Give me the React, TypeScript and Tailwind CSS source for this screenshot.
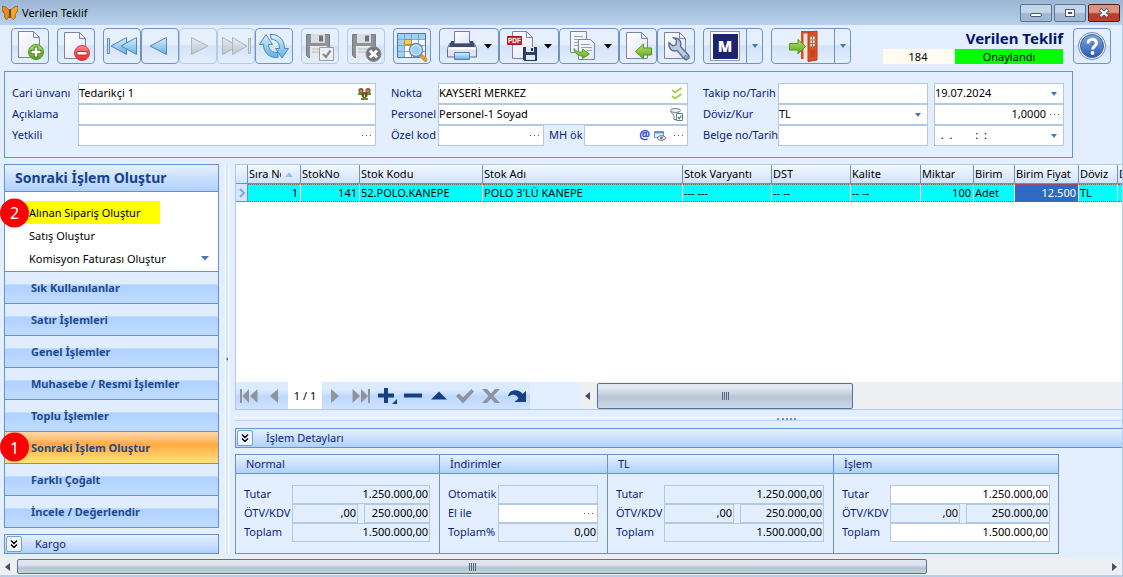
import React from 'react';
import clsx from 'clsx';

const toolButton =
  'flex h-9 items-center justify-center rounded-sm border bg-linear-to-b from-[#e6f0fc] from-45% via-[#d3e3f7] via-50% to-[#e3effe]';

// Gradients shared by all the toolbar drawings
const IconDefs = () => (
  <svg className="absolute size-0" aria-hidden="true">
    <defs>
      <linearGradient id="blue" x1="0" y1="0" x2="0" y2="1">
        <stop offset="0" stopColor="#d8effc" />
        <stop offset="1" stopColor="#5fb2e6" />
      </linearGradient>
      <linearGradient id="grey" x1="0" y1="0" x2="0" y2="1">
        <stop offset="0" stopColor="#e8ecf2" />
        <stop offset="1" stopColor="#bcc3cd" />
      </linearGradient>
      <linearGradient id="paper" x1="0" y1="0" x2="1" y2="1">
        <stop offset="0" stopColor="#ffffff" />
        <stop offset="1" stopColor="#e2e6f4" />
      </linearGradient>
      <linearGradient id="green" x1="0" y1="0" x2="0" y2="1">
        <stop offset="0" stopColor="#b6e46a" />
        <stop offset="1" stopColor="#5aa51c" />
      </linearGradient>
      <linearGradient id="red" x1="0" y1="0" x2="0" y2="1">
        <stop offset="0" stopColor="#ff8d88" />
        <stop offset="1" stopColor="#e8202c" />
      </linearGradient>
      <linearGradient id="help" x1="0" y1="0" x2="0" y2="1">
        <stop offset="0" stopColor="#7fa6e0" />
        <stop offset="1" stopColor="#2a5cb4" />
      </linearGradient>
    </defs>
  </svg>
);

type IconProps = { children: React.ReactNode; className?: string; box?: string };

const Icon = ({ children, className = 'size-8', box = '0 0 32 32' }: IconProps) => (
  <svg viewBox={box} className={clsx('shrink-0', className)} fill="none" aria-hidden="true">
    {children}
  </svg>
);

const Sheet = () => (
  <>
    <path d="M4.500 2.500h15l6 6v20h-21z" fill="url(#paper)" stroke="#7a86a8" />
    <path d="M19.500 2.500v6h6z" fill="#f4f6fc" stroke="#7a86a8" />
  </>
);

const NewIcon = () => (
  <Icon>
    <path d="M4.500 1.500h15l6 6v20h-21z" fill="url(#paper)" stroke="#7a86a8" />
    <path d="M19.500 1.500v6h6z" fill="#f4f6fc" stroke="#7a86a8" />
    <circle cx="22" cy="22" r="7.500" fill="url(#green)" stroke="#4d8d1a" />
    <path d="M22 16.500v11M16.500 22h11" stroke="#47801c" strokeWidth="4.500" />
    <path d="M22 17.500v9M17.500 22h9" stroke="#fff" strokeWidth="2.500" />
  </Icon>
);

const DeleteIcon = () => (
  <Icon>
    <Sheet />
    <circle cx="22" cy="23" r="7.500" fill="url(#red)" stroke="#dc3a40" />
    <path d="M17 21.500h10v3.500h-10z" fill="#fff" stroke="#b8353b" />
  </Icon>
);

const FirstIcon = () => (
  <Icon>
    <path d="M1.500 8.500h2v15h-2z" fill="#bfe2f6" stroke="#6689bb" />
    <path d="M20.500 7.500v17L5 16z" fill="url(#blue)" stroke="#5c82b8" />
    <path d="M30.500 7.500v17L15 16z" fill="url(#blue)" stroke="#5c82b8" />
  </Icon>
);

const PrevIcon = () => (
  <Icon>
    <path d="M22.500 7.500v17L6 16z" fill="url(#blue)" stroke="#5c82b8" />
  </Icon>
);

const NextIcon = () => (
  <Icon>
    <path d="M9.500 7.500v17L26 16z" fill="url(#grey)" stroke="#adb4be" />
  </Icon>
);

const LastIcon = () => (
  <Icon>
    <path d="M2.500 7.500v17L18 16z" fill="url(#grey)" stroke="#adb4be" />
    <path d="M12.500 7.500v17L27 16z" fill="url(#grey)" stroke="#adb4be" />
    <path d="M28.500 8.500h2v15h-2z" fill="#d9dde4" stroke="#adb4be" />
  </Icon>
);

// Two bent arrows chasing each other
const RefreshIcon = () => (
  <Icon>
    <path d="M8 4.500 1.500 14.500h4C5.500 22 11 27.500 17.500 27.500h2.500v-5C14.500 23 10.500 20 10.500 14.500h4z" fill="url(#blue)" stroke="#5486ba" />
    <path d="M24 28 30.500 18.500h-4C26.500 10 21 4.500 14 4.500h-2L13.500 9.500c5 0 8 3.500 8 9h-4z" fill="url(#blue)" stroke="#5486ba" />
  </Icon>
);

const GreyDisk = () => (
  <>
    <path d="M2.500 4.500h23v23h-21l-2-2z" fill="#8d9198" stroke="#777b82" />
    <path d="M7 4h14v9H7z" fill="#d9dce1" />
    <path d="M15 5.500h4v6h-4z" fill="#6e7278" />
    <path d="M6 16h17v12H6z" fill="#e6e8ec" />
    <path d="M8 19h13M8 22h13" stroke="#b6bac1" />
  </>
);

const SaveIcon = () => (
  <Icon>
    <GreyDisk />
    <path d="M15.500 17.500h14v13h-14z" fill="#eceef1" stroke="#999da5" />
    <path d="m19 24 3 3 4.500-6.500" stroke="#888c94" strokeWidth="2.200" />
  </Icon>
);

const CancelSaveIcon = () => (
  <Icon>
    <GreyDisk />
    <circle cx="23.500" cy="24" r="7.500" fill="#74777e" stroke="#8e9198" />
    <path d="m20 20.500 7 7m0-7-7 7" stroke="#fff" strokeWidth="3" />
  </Icon>
);

const TableSearchIcon = () => (
  <Icon>
    <path d="M1.500 3.500h28v24h-28z" fill="#fff" stroke="#4878b8" />
    <path d="M2 4h27v5H2zM2 9h6v18H2z" fill="#9ed0f1" />
    <path d="M2 9.500h27M2 15.500h27M2 21.500h27M8.500 4v23M15.500 4v23M22.500 4v23" stroke="#7ea5d4" />
    <path d="M8.500 9.500h7v5h-7z" fill="#ffc95e" stroke="#c58a28" />
    <path d="m24.500 25 5 5" stroke="#d99a3f" strokeWidth="4" strokeLinecap="round" />
    <circle cx="20" cy="20" r="6.500" fill="#d5effc" stroke="#6f88b8" strokeWidth="1.500" />
    <circle cx="20" cy="20" r="4.500" fill="#9bd0f3" />
  </Icon>
);

const PrintIcon = () => (
  <Icon>
    <path d="M3.500 13.500h25l2 5v8.500h-29v-8.500z" fill="#dfe5f0" stroke="#63708f" />
    <path d="M5 11h22l2 6H3z" fill="#3c4b6b" />
    <path d="M8.500 1.500h15v12h-15z" fill="url(#paper)" stroke="#7380a0" />
    <path d="M2.500 18.500h27" stroke="#fff" strokeWidth="2" />
    <path d="M8.500 22.500h15v7h-15z" fill="url(#blue)" stroke="#5d79a4" />
  </Icon>
);

const PdfIcon = () => (
  <Icon>
    <path d="M6.500 1.500h14l6 6v21h-20z" fill="url(#paper)" stroke="#7a86a8" />
    <path d="M20.500 1.500v6h6z" fill="#fff" stroke="#7a86a8" />
    <path d="M1.500 6.500h14v8h-14z" fill="#d9232e" stroke="#a91622" />
    <text x="2" y="13" fontSize="6.500" fontWeight="700" fontFamily="Liberation Sans, sans-serif" fill="#fff">
      PDF
    </text>
    <path d="M17.500 17.500h13v13h-12l-1-1z" fill="#2e4168" stroke="#23324f" />
    <path d="M20 17h8v5h-8zM20 25h9v5h-9z" fill="#dfe6f2" />
    <path d="M25 18h2v3h-2z" fill="#23324f" />
  </Icon>
);

const CopyIcon = () => (
  <Icon>
    <path d="M4.500 1.500h16v21h-16z" fill="url(#paper)" stroke="#7a86a8" />
    <path d="M8 6.500h9M8 9.500h6M8 12.500h6M8 15.500h6" stroke="#8da2cd" />
    <path d="M12.500 9.500h12l4 4v16h-16z" fill="url(#paper)" stroke="#7a86a8" />
    <path d="M15 14.500h9M15 17.500h11M21 20.500h5" stroke="#8da2cd" />
    <path d="M8 18.500c1.500 3 5 4 8.500 3.500V19l7 5-7 4.500V26C12 26 8.500 23 8 18.500z" fill="url(#green)" stroke="#54951c" />
  </Icon>
);

const ImportIcon = () => (
  <Icon>
    <Sheet />
    <path d="M13.500 21.500 21.500 14v4h8v7h-8v4z" fill="url(#green)" stroke="#54951c" />
  </Icon>
);

const SettingsSheetIcon = () => (
  <Icon>
    <Sheet />
    <path
      d="M9 12.500l4 3.500 3-1.500.500-4.500-3-2c5-.500 8.500 3 7 8.500l8 8.500c2 3-1.500 6-4 4l-7.500-8.500C12 22.500 8 18 9 12.500z"
      fill="#b9c9e0"
      stroke="#566c90"
      strokeWidth="1.300"
    />
    <circle cx="26" cy="27" r="1.300" fill="#fff" stroke="#566c90" />
  </Icon>
);

const DoorIcon = () => (
  <Icon className="h-8 w-9" box="0 0 36 32">
    <path d="M17 1h14v28H17z" fill="#fbe3d6" />
    <path d="M16 1h14v2.500H18.500V29H16z" fill="#d9492a" />
    <path d="M23 2.500 32 1v29l-9 1.500z" fill="#dc4f23" stroke="#bd3d16" />
    <path d="M25 6.500 30 6v10.500l-5 .500z" fill="#ffefcb" stroke="#a1755d" />
    <path d="M27.500 6v11M25 10h5M25 13.500h5" stroke="#a1755d" />
    <path d="M25 20.500 30 20v7l-5 .500z" fill="#c5431b" />
    <path d="M20.500 16.500 13 9.500v4H4.500v6.500H13v4z" fill="url(#green)" stroke="#54951c" />
  </Icon>
);

const HelpIcon = () => (
  <Icon>
    <circle cx="16" cy="16" r="13.500" fill="#f3f7fd" stroke="#6b87b8" />
    <circle cx="16" cy="16" r="11.500" fill="url(#help)" stroke="#3b62a8" />
    <path d="M12 13.500c0-5.500 8.500-5.500 8.500-.500 0 3.500-4 3.500-4 6.500" stroke="#fff" strokeWidth="3" />
    <circle cx="16.500" cy="23" r="1.900" fill="#fff" />
  </Icon>
);

const Caret = ({ className = 'text-[#4a77b4]' }: { className?: string }) => (
  <svg viewBox="0 0 8 5" className={clsx('h-[5px] w-2 shrink-0', className)} aria-hidden="true">
    <path d="M0 0h8L4 4.500z" fill="currentColor" />
  </svg>
);

const SmallCaret = () => (
  <svg viewBox="0 0 6 4" className="h-1 w-1.5 shrink-0 text-[#4a77b4]" aria-hidden="true">
    <path d="M0 0h6L3 4z" fill="currentColor" />
  </svg>
);

const Dots = () => (
  <svg viewBox="0 0 9 2" className="h-0.5 w-[9px] shrink-0" aria-hidden="true">
    <path d="M0 0h1v1H0zM4 0h1v1H4zM8 0h1v1H8z" fill="#3b5f96" />
  </svg>
);

type ToolProps = { label: string; children: React.ReactNode; disabled?: boolean; className?: string };

const Tool = ({ label, children, disabled, className = 'w-[38px]' }: ToolProps) => (
  <button
    type="button"
    aria-label={label}
    disabled={disabled}
    className={clsx(toolButton, className, disabled ? 'border-[#b5cae4]' : 'border-[#7193c3]')}
  >
    {children}
  </button>
);

const MenuTool = ({ label, children }: ToolProps) => (
  <Tool label={label} className="w-[60px] gap-1.5">
    {children}
    <Caret className="text-black" />
  </Tool>
);

const SplitTool = ({ label, children, wide }: ToolProps & { wide?: boolean }) => (
  <div className={clsx(toolButton, 'border-[#7193c3]', wide ? 'w-20' : 'w-15')}>
    <button type="button" aria-label={label} className="flex h-full flex-1 items-center justify-center">
      {children}
    </button>
    <button
      type="button"
      aria-label={`${label} menü`}
      className="flex h-full w-4 items-center justify-center border-l border-[#7193c3]"
    >
      <SmallCaret />
    </button>
  </div>
);

const TitleBar = () => (
  <header className="flex h-[25px] items-center bg-linear-to-b from-[#9cb6d3] to-[#b7d1ec] pr-[3px] pl-0.5">
    <svg viewBox="0 0 16 16" className="size-4" aria-hidden="true">
      <path d="M7.500 6C5 2 2 1 0 1.500 0 5 1 8 3 9c-1 2 0 5 1.500 5.500C6.500 14 7.500 11 7.500 8z" fill="#f08a12" stroke="#80440c" strokeWidth=".7" />
      <path d="M8.500 6C11 2 14 1 16 1.500c0 3.500-1 6.500-3 7.500 1 2 0 5-1.500 5.500C9.500 14 8.500 11 8.500 8z" fill="#f7a823" stroke="#80440c" strokeWidth=".7" />
      <path d="M8 4v9" stroke="#4a2b10" strokeWidth="1.200" />
    </svg>
    <h1 className="ml-1 flex-1 text-[11px]">Verilen Teklif</h1>
    <div className="flex gap-0.5">
      <button
        type="button"
        aria-label="Simge durumuna küçült"
        className="flex h-[18px] w-8 items-center justify-center rounded-xs border border-[#5b7290] bg-linear-to-b from-[#c3d6ea] from-45% to-[#9fb9d5] to-55%"
      >
        <span className="mt-1 h-1 w-3 rounded-xs border border-[#535666] bg-white" />
      </button>
      <button
        type="button"
        aria-label="Önceki boyut"
        className="flex h-[18px] w-8 items-center justify-center rounded-xs border border-[#5b7290] bg-linear-to-b from-[#c3d6ea] from-45% to-[#9fb9d5] to-55%"
      >
        <span className="flex h-2 w-2.5 items-center justify-center border border-[#535666] bg-white">
          <span className="h-0.5 w-1 bg-[#535666]" />
        </span>
      </button>
      <button
        type="button"
        aria-label="Kapat"
        className="flex h-[18px] w-8 items-center justify-center rounded-xs border border-[#541a1e] bg-linear-to-b from-[#dd9384] from-45% to-[#bd3d26] to-55%"
      >
        <svg viewBox="0 0 12 10" className="h-2.5 w-3" aria-hidden="true">
          <path d="m2 1.500 8 7m0-7-8 7" stroke="#535666" strokeWidth="4" />
          <path d="m2.500 2 7 6m0-6-7 6" stroke="#fff" strokeWidth="2.300" />
        </svg>
      </button>
    </div>
  </header>
);

const Toolbar = () => (
  <div className="flex items-start pt-[3px] pr-[11px] pl-[11px]">
    <div className="flex gap-2">
      <Tool label="Yeni"><NewIcon /></Tool>
      <Tool label="Sil"><DeleteIcon /></Tool>
      <div className="flex">
        <Tool label="İlk kayıt"><FirstIcon /></Tool>
        <Tool label="Önceki kayıt"><PrevIcon /></Tool>
        <Tool label="Sonraki kayıt" disabled><NextIcon /></Tool>
        <Tool label="Son kayıt" disabled><LastIcon /></Tool>
        <Tool label="Yenile"><RefreshIcon /></Tool>
      </div>
      <Tool label="Kaydet" disabled><SaveIcon /></Tool>
      <Tool label="Vazgeç" disabled><CancelSaveIcon /></Tool>
      <Tool label="Listele"><TableSearchIcon /></Tool>
      <div className="flex">
        <MenuTool label="Yazdır"><PrintIcon /></MenuTool>
        <MenuTool label="PDF kaydet"><PdfIcon /></MenuTool>
        <MenuTool label="Kopyala"><CopyIcon /></MenuTool>
        <Tool label="İçeri al"><ImportIcon /></Tool>
        <Tool label="Ayarlar"><SettingsSheetIcon /></Tool>
      </div>
      <SplitTool label="M">
        <span className="flex size-[30px] items-center justify-center border border-[#8f97bb] bg-white">
          <span className="flex size-[25px] items-center justify-center bg-[#1c2470] text-[15px] font-black text-white">
            M
          </span>
        </span>
      </SplitTool>
      <SplitTool label="Çıkış" wide><DoorIcon /></SplitTool>
    </div>
    <div className="ml-auto w-[180px]">
      <h2 className="text-right text-[15px] leading-5 font-bold text-[#00146e]">Verilen Teklif</h2>
      <div className="mt-px flex gap-0.5 text-center text-[11px] leading-[15px]">
        <span className="w-[70px] bg-[#fffbf0]">184</span>
        <span className="flex-1 bg-[#00ff00]">Onaylandı</span>
      </div>
    </div>
    <Tool label="Yardım" className="ml-2.5 w-[38px]"><HelpIcon /></Tool>
  </div>
);

type FieldProps = {
  id: string;
  value?: string;
  className?: string;
  right?: boolean;
  children?: React.ReactNode;
};

const Field = ({ id, value = '', className, right, children }: FieldProps) => (
  <div className={clsx('flex h-[21px] items-center gap-1 border border-[#b3c8e4] bg-white', children && 'pr-1', className)}>
    <input
      id={id}
      defaultValue={value}
      className={clsx('h-full w-0 min-w-0 flex-1 bg-transparent pb-0.5 text-black outline-none', right && 'text-right')}
    />
    {children}
  </div>
);

const Label = ({ id, className, children }: { id: string; className?: string; children: React.ReactNode }) => (
  <label htmlFor={id} className={clsx('shrink-0 pb-0.5 whitespace-nowrap text-[#0b1d78]', className)}>
    {children}
  </label>
);

const PeopleIcon = () => (
  <Icon className="h-3 w-[13px]" box="0 0 13 12">
    <path d="M0 5h5v2H0zM8 5h5v2H8zM3 10h7v2H3z" fill="#4e9a3a" />
    <circle cx="3" cy="2.700" r="2.600" fill="#8a5a30" />
    <circle cx="10" cy="2.700" r="2.600" fill="#8a5a30" />
    <circle cx="6.500" cy="7" r="3" fill="#7b4a22" />
    <path d="M2.500 2h1v2h-1zM9.500 2h1v2h-1zM6 6.500h1V9H6z" fill="#f3cf9c" />
  </Icon>
);

const ChecksIcon = () => (
  <Icon className="h-[13px] w-3" box="0 0 12 13">
    <path d="m1 3 3 2.500L10.500 1M1 9l3 2.500L10.500 7" stroke="#a5cf55" strokeWidth="1.800" />
  </Icon>
);

const FilterIcon = () => (
  <Icon className="size-[13px]" box="0 0 13 13">
    <ellipse cx="5.500" cy="2.500" rx="5" ry="2" fill="#eef1f6" stroke="#6b7a94" />
    <path d="M.5 3.500 4 7.500v4h2.500" stroke="#6b7a94" />
    <path d="M6.500 5.500h6v7h-6z" fill="#fff" stroke="#6b7a94" />
    <path d="m8 9 1.300 1.700L11.500 7.500" stroke="#3e9b2b" strokeWidth="1.300" />
  </Icon>
);

const PreviewIcon = () => (
  <Icon className="h-2.5 w-3" box="0 0 12 10">
    <path d="M.5.5h9v6h-9z" fill="#e9f3fd" stroke="#6d93c4" />
    <path d="M1 1h8v1.500H1z" fill="#5a95d6" />
    <ellipse cx="7.500" cy="7" rx="4" ry="2.300" fill="#fff" stroke="#56657f" />
    <circle cx="7.500" cy="7" r="1.300" fill="#56657f" />
  </Icon>
);

const DocumentForm = () => (
  <form className="mx-1 mt-[7px] flex w-[1069px] border border-[#6593cf] px-[7px] pt-[11px] pb-[11px]">
    <div className="w-[379px]">
      <div className="flex items-center">
        <Label id="cari" className="w-[66px]">Cari ünvanı</Label>
        <Field id="cari" value="Tedarikçi 1" className="w-[298px] pr-0.5"><PeopleIcon /></Field>
      </div>
      <div className="flex items-center">
        <Label id="aciklama" className="w-[66px]">Açıklama</Label>
        <Field id="aciklama" className="w-[298px]" />
      </div>
      <div className="flex items-center">
        <Label id="yetkili" className="w-[66px]">Yetkili</Label>
        <Field id="yetkili" className="w-[298px]"><Dots /></Field>
      </div>
    </div>
    <div className="w-[312px]">
      <div className="flex items-center">
        <Label id="nokta" className="w-[47px]">Nokta</Label>
        <Field id="nokta" value="KAYSERİ MERKEZ" className="w-[250px]"><ChecksIcon /></Field>
      </div>
      <div className="flex items-center">
        <Label id="personel" className="w-[47px]">Personel</Label>
        <Field id="personel" value="Personel-1 Soyad" className="w-[250px] pr-0.5"><FilterIcon /></Field>
      </div>
      <div className="flex items-center">
        <Label id="ozelkod" className="w-[47px]">Özel kod</Label>
        <Field id="ozelkod" className="w-[106px]"><Dots /></Field>
        <Label id="mhok" className="w-10 pl-[5px]">MH ök</Label>
        <Field id="mhok" className="w-[104px]">
          <span className="pb-0.5 text-[12px] font-bold text-[#2846e0]">@</span>
          <PreviewIcon />
          <span className="flex pl-1"><Dots /></span>
        </Field>
      </div>
    </div>
    <div className="w-[361px]">
      <div className="flex items-center">
        <Label id="takip" className="w-[75px]">Takip no/Tarih</Label>
        <Field id="takip" className="mr-1.5 w-[150px]" />
        <Field id="tarih" value="19.07.2024" className="w-[130px] pr-1.5"><SmallCaret /></Field>
      </div>
      <div className="flex items-center">
        <Label id="doviz" className="w-[75px]">Döviz/Kur</Label>
        <div className="mr-1.5 flex h-[21px] w-[150px] items-center border border-[#b3c8e4] bg-white pr-1.5">
          <select id="doviz" defaultValue="TL" className="h-full flex-1 appearance-none bg-transparent pb-0.5 text-black outline-none">
            <option>TL</option>
          </select>
          <SmallCaret />
        </div>
        <Field id="kur" value="1,0000" right className="w-[130px]"><Dots /></Field>
      </div>
      <div className="flex items-center">
        <Label id="belge" className="w-[75px]">Belge no/Tarih</Label>
        <Field id="belge" className="mr-1.5 w-[150px]" />
        <Field id="belgetarih" value={'\u00a0\u00a0.\u00a0\u00a0.\u00a0\u00a0\u00a0\u00a0\u00a0\u00a0\u00a0\u00a0:\u00a0\u00a0:'} className="w-[130px] pr-1.5"><SmallCaret /></Field>
      </div>
    </div>
  </form>
);

const StepBadge = ({ step }: { step: number }) => (
  <span className="absolute top-1/2 -left-[5px] flex size-[29px] -translate-y-1/2 items-center justify-center rounded-full bg-[#fb0007] text-base text-white">
    {step}
  </span>
);

const groups = [
  'Sık Kullanılanlar',
  'Satır İşlemleri',
  'Genel İşlemler',
  'Muhasebe / Resmi İşlemler',
  'Toplu İşlemler',
  'Sonraki İşlem Oluştur',
  'Farklı Çoğalt',
  'İncele / Değerlendir',
];

const ExpandButton = ({ label }: { label: string }) => (
  <button
    type="button"
    aria-label={label}
    className="flex size-4 items-center justify-center rounded-xs border border-[#7f9dc6] bg-[#eef4fd]"
  >
    <svg viewBox="0 0 8 8" className="size-2" fill="none" stroke="#000" strokeWidth="1.400" aria-hidden="true">
      <path d="m1 .5 3 3 3-3M1 4.500l3 3 3-3" />
    </svg>
  </button>
);

const Sidebar = () => (
  <aside className="flex w-[215px] shrink-0 flex-col justify-between">
    <nav className="border border-[#6593cf] bg-white">
      <h2 className="h-[27px] border-b border-[#6593cf] bg-linear-to-b from-[#e6f1ff] to-[#b0d0fb] pl-2.5 text-sm leading-[26px] font-bold text-[#15428b]">
        Sonraki İşlem Oluştur
      </h2>
      <ul className="pt-[9px] pb-px text-[11px] leading-[23px] text-black">
        <li className="relative pl-5">
          <a href="#siparis" className="block w-[135px] bg-[#ffff00] pl-1 whitespace-nowrap">Alınan Sipariş Oluştur</a>
          <StepBadge step={2} />
        </li>
        <li className="pl-6"><a href="#satis">Satış Oluştur</a></li>
        <li className="flex items-center justify-between pr-[9px] pl-6">
          <a href="#komisyon">Komisyon Faturası Oluştur</a>
          <Caret />
        </li>
      </ul>
      <ul>
        {groups.map((group) => (
          <li key={group} className="relative">
            <button
              type="button"
              className={clsx(
                'h-8 w-full border-t border-[#6593cf] bg-linear-to-b pl-[26px] text-left text-[11px] font-bold text-[#1f4a8c]',
                group === 'Sonraki İşlem Oluştur'
                  ? 'from-[#ffd9aa] from-0% via-[#ffab3f] via-40% to-[#fee17a] to-100%'
                  : 'from-[#dfedff] from-38% via-[#afd2ff] via-42% to-[#c0dbff] to-100%',
              )}
            >
              {group}
            </button>
            {group === 'Sonraki İşlem Oluştur' && <StepBadge step={1} />}
          </li>
        ))}
      </ul>
    </nav>
    <div className="mt-1.5 flex h-5 items-center border border-[#6593cf] bg-linear-to-b from-[#e6f1ff] to-[#b0d0fb] pl-px text-[#0b1d78]">
      <ExpandButton label="Kargo bölümünü aç" />
      <span className="pl-[13px]">Kargo</span>
    </div>
  </aside>
);

const columns = [
  { title: 'Sıra No', value: '1', width: 'w-[53px]', right: true, sorted: true },
  { title: 'StokNo', value: '141', width: 'w-[59px]', right: true },
  { title: 'Stok Kodu', value: '52.POLO.KANEPE', width: 'w-[123px]' },
  { title: 'Stok Adı', value: "POLO 3'LÜ KANEPE", width: 'w-[200px]' },
  { title: 'Stok Varyantı', value: '--- ---', width: 'w-[89px]' },
  { title: 'DST', value: '-- --', width: 'w-[79px]' },
  { title: 'Kalite', value: '-- --', width: 'w-[70px]' },
  { title: 'Miktar', value: '100', width: 'w-[53px]', right: true },
  { title: 'Birim', value: 'Adet', width: 'w-[41px]' },
  { title: 'Birim Fiyat', value: '12.500', width: 'w-16', right: true, selected: true },
  { title: 'Döviz', value: 'TL', width: 'w-[39px]' },
  { title: 'Döviz Kuru', value: '', width: 'w-20' },
];

const StockTable = () => (
  <div className="min-h-[217px] flex-1 overflow-hidden bg-white">
    <table className="w-[962px] table-fixed border-separate border-spacing-0 text-black">
      <thead>
        <tr className="h-[19px]">
          <th aria-label="Satır" className="w-3 border-r border-b border-[#6593cf] bg-linear-to-b from-[#f5f9ff] to-[#cfe2fb]" />
          {columns.map((col) => (
            <th
              key={col.title}
              className={clsx(
                col.width,
                'border-r border-b border-[#6593cf] bg-linear-to-b from-[#f5f9ff] to-[#cfe2fb] p-0 pl-px text-left font-normal',
              )}
            >
              <div className="flex items-center overflow-hidden leading-[18px] whitespace-nowrap">
                <span className={clsx('overflow-hidden', col.sorted && 'w-8')}>{col.title}</span>
                {col.sorted && <Caret className="ml-1 rotate-180 text-[#8fbcf3]" />}
              </div>
            </th>
          ))}
        </tr>
      </thead>
      <tbody>
        <tr className="h-[18px]">
          <td className="border-r border-b border-[#6593cf] bg-[#d5e6fc] p-0">
            <svg viewBox="0 0 11 10" className="h-2.5 w-[11px]" fill="none" stroke="#7ba7e0" strokeWidth="2" aria-hidden="true">
              <path d="m4 1 4 4-4 4" />
            </svg>
          </td>
          {columns.map((col) => (
            <td
              key={col.title}
              className={clsx(
                'overflow-hidden border-y border-r border-y-[#ff2a1a] border-r-white p-0 px-px leading-4 whitespace-nowrap [border-bottom-style:dotted] [border-top-style:dotted]',
                col.right && 'pr-0.5 text-right',
                col.selected ? 'bg-[#316ac5] text-white' : 'bg-[#00ffff]',
              )}
            >
              {col.value}
            </td>
          ))}
        </tr>
      </tbody>
    </table>
  </div>
);

const NavButton = ({ label, children, className = 'text-[#8f949c]' }: ToolProps) => (
  <button type="button" aria-label={label} className={clsx('flex h-full w-[26px] items-center justify-center', className)}>
    <svg viewBox="0 0 20 16" className="h-4 w-5" fill="currentColor" aria-hidden="true">
      {children}
    </svg>
  </button>
);

const Grip = () => (
  <span className="flex gap-px">
    <span className="h-2 w-px bg-[#56657f]" />
    <span className="h-2 w-px bg-[#56657f]" />
    <span className="h-2 w-px bg-[#56657f]" />
    <span className="h-2 w-px bg-[#56657f]" />
  </span>
);

const Arrow = ({ right }: { right?: boolean }) => (
  <svg viewBox="0 0 5 8" className={clsx('h-2 w-[5px]', right && 'rotate-180')} fill="#3e506e" aria-hidden="true">
    <path d="M5 0v8L0 4z" />
  </svg>
);

const Navigator = () => (
  <div className="flex h-7 border-b border-[#b3c8e4]">
    <div className="flex items-center bg-linear-to-b from-[#dceafe] from-30% via-[#bdd8fd] via-55% to-[#cfe2ff]">
      <NavButton label="İlk satır">
        <path d="M1 1h2v14H1zM10 1v14L3.500 8zM18.500 1v14L11 8z" />
      </NavButton>
      <NavButton label="Önceki satır"><path d="M13 1v14L5 8z" /></NavButton>
      <span className="flex h-full w-[34px] items-center justify-center bg-white text-[11px] text-black">1 / 1</span>
      <NavButton label="Sonraki satır"><path d="M6 1v14l8-7z" /></NavButton>
      <NavButton label="Son satır">
        <path d="M1.500 1v14L9 8zM10 1v14l7-7zM17 1h2v14h-2z" />
      </NavButton>
      <NavButton label="Satır ekle" className="text-[#173f86]">
        <path d="M7 0h4v5.500h6v4h-6V15H7V9.500H1v-4h6zM20 11v5h-5z" />
      </NavButton>
      <NavButton label="Satır sil" className="text-[#173f86]"><path d="M1 5.500h18v4H1z" /></NavButton>
      <NavButton label="Düzenle" className="text-[#173f86]"><path d="M10 3.500 18 11.500H2z" /></NavButton>
      <NavButton label="Onayla"><path d="m1 8 3-2.500L8 9.500 16.500 1 19 3.500 8 15.500z" /></NavButton>
      <NavButton label="İptal"><path d="M1 1h5l4 4.500L14 1h5l-6.500 7L19 15h-5l-4-4.500L6 15H1l6.500-7z" /></NavButton>
      <NavButton label="Yenile" className="text-[#173f86]">
        <path d="M1 8.500C2 1 12 .500 15.500 6L19 3v11H7.500l4-3.500C9 6 5.500 6 1 8.500z" />
      </NavButton>
    </div>
    <div className="w-[50px]" />
    <div className="flex min-w-0 flex-1 items-center bg-[#eeeff1]">
      <button type="button" aria-label="Sola kaydır" className="flex w-[17px] pl-[5px]">
        <Arrow />
      </button>
      <div className="flex h-[26px] w-[256px] items-center justify-center rounded-xs border border-[#586f99] bg-linear-to-b from-[#e3e8ef] from-15% via-[#b9c6d8] via-55% to-[#cdd7e4]">
        <Grip />
      </div>
    </div>
  </div>
);

type Amounts = {
  title: string;
  width: string;
  wide: string;
  first: string;
  second: string;
  editable?: boolean;
};

const totals: Amounts[] = [
  { title: 'Normal', width: 'w-[204px]', wide: 'w-[138px]', first: 'w-[66px]', second: 'w-[66px]' },
  { title: 'TL', width: 'w-[226px]', wide: 'w-40', first: 'w-[70px]', second: 'w-[84px]' },
  { title: 'İşlem', width: 'w-[225px]', wide: 'w-40', first: 'w-[70px]', second: 'w-[84px]', editable: true },
];

const Amount = ({ id, value, className, white }: { id: string; value: string; className: string; white?: boolean }) => (
  <input
    id={id}
    aria-label={id}
    defaultValue={value}
    readOnly={!white}
    className={clsx(
      'h-[19px] border border-[#b3c8e4] px-px pb-0.5 text-right text-black outline-none',
      white ? 'bg-white' : 'bg-transparent',
      className,
    )}
  />
);

const Box = ({ title, width, children }: { title: string; width: string; children: React.ReactNode }) => (
  <fieldset className={clsx('h-[100px] shrink-0 border-y border-r border-[#6593cf] text-[#0b1d78]', width)}>
    <h3 className="h-[19px] border-b border-[#6593cf] bg-linear-to-b from-[#e6f1ff] to-[#b0d0fb] pl-2.5 leading-[18px]">
      {title}
    </h3>
    <div className="pt-[11px] pl-2">{children}</div>
  </fieldset>
);

const TotalsBox = ({ title, width, wide, first, second, editable }: Amounts) => (
  <Box title={title} width={width}>
    <div className="flex items-center">
      <Label id={`${title}-tutar`} className="w-12">Tutar</Label>
      <Amount id={`${title}-tutar`} value="1.250.000,00" className={wide} white={editable} />
    </div>
    <div className="flex items-center">
      <Label id={`${title}-otv`} className="w-12">ÖTV/KDV</Label>
      <Amount id={`${title}-otv`} value=",00" className={clsx('mr-1.5', first)} />
      <Amount id={`${title}-kdv`} value="250.000,00" className={second} />
    </div>
    <div className="flex items-center">
      <Label id={`${title}-toplam`} className="w-12">Toplam</Label>
      <Amount id={`${title}-toplam`} value="1.500.000,00" className={wide} white={editable} />
    </div>
  </Box>
);

const DiscountBox = () => (
  <Box title="İndirimler" width="w-[168px]">
    <div className="flex items-center">
      <Label id="otomatik" className="w-[50px]">Otomatik</Label>
      <Amount id="otomatik" value="" className="w-[100px]" />
    </div>
    <div className="flex items-center">
      <Label id="elile" className="w-[50px]">El ile</Label>
      <div className="flex h-[19px] w-[100px] items-center border border-[#b3c8e4] bg-white pr-1">
        <input id="elile" className="w-0 flex-1 outline-none" />
        <Dots />
      </div>
    </div>
    <div className="flex items-center">
      <Label id="toplamyuzde" className="w-[50px]">Toplam%</Label>
      <Amount id="toplamyuzde" value="0,00" className="w-[100px]" />
    </div>
  </Box>
);

const Details = () => (
  <section>
    <div className="my-[7px] flex h-1 justify-center border-y border-t-white border-b-[#bcd6f8] pl-[215px]">
      <span className="w-[19px] border-t-2 border-dotted border-[#6593cf]" />
    </div>
    <div className="flex h-5 items-center border border-r-0 border-[#6593cf] bg-linear-to-b from-[#e6f1ff] to-[#b0d0fb] pl-px text-[#0b1d78]">
      <ExpandButton label="İşlem detaylarını aç" />
      <span className="pl-[13px]">İşlem Detayları</span>
    </div>
    <div className="mt-1.5 flex border-l border-[#6593cf]">
      <TotalsBox {...totals[0]} />
      <DiscountBox />
      <TotalsBox {...totals[1]} />
      <TotalsBox {...totals[2]} />
    </div>
  </section>
);

const App = () => (
  <div className="flex min-h-screen flex-col overflow-hidden bg-[#e3efff] font-['Noto_Sans','Open_Sans',sans-serif] text-[11px] leading-4">
    <IconDefs />
    <TitleBar />
    <div className="flex flex-1 flex-col border-r border-b-3 border-[#b3cdea]">
      <Toolbar />
      <DocumentForm />
      <main className="mt-1.5 flex flex-1 pl-1">
        <Sidebar />
        <div className="flex w-4 shrink-0 items-center pl-1.5">
          <div className="flex h-full w-1 items-center border-x border-x-white bg-[#d3e5fc]">
            <svg viewBox="0 0 3 6" className="h-1.5 w-[3px]" fill="#4a77b4" aria-hidden="true">
              <path d="M3 0v6L0 3z" />
            </svg>
          </div>
        </div>
        <div className="flex min-w-0 flex-1 flex-col">
          <div className="flex flex-1 flex-col border-t border-l border-[#b3c8e4]">
            <StockTable />
            <Navigator />
          </div>
          <Details />
        </div>
      </main>
      <div className="mt-1 flex h-[17px] items-center bg-[#eeeff1]">
        <button type="button" aria-label="Sola kaydır" className="flex w-[17px] pl-[5px]">
          <Arrow />
        </button>
        <div className="mr-[179px] flex h-[15px] flex-1 items-center justify-center rounded-xs border border-[#586f99] bg-linear-to-b from-[#dfe5ec] from-35% via-[#b5c3d5] via-60% to-[#c6d1df]">
          <Grip />
        </div>
        <button type="button" aria-label="Sağa kaydır" className="flex w-4 justify-center">
          <Arrow right />
        </button>
      </div>
    </div>
  </div>
);

export default App;
